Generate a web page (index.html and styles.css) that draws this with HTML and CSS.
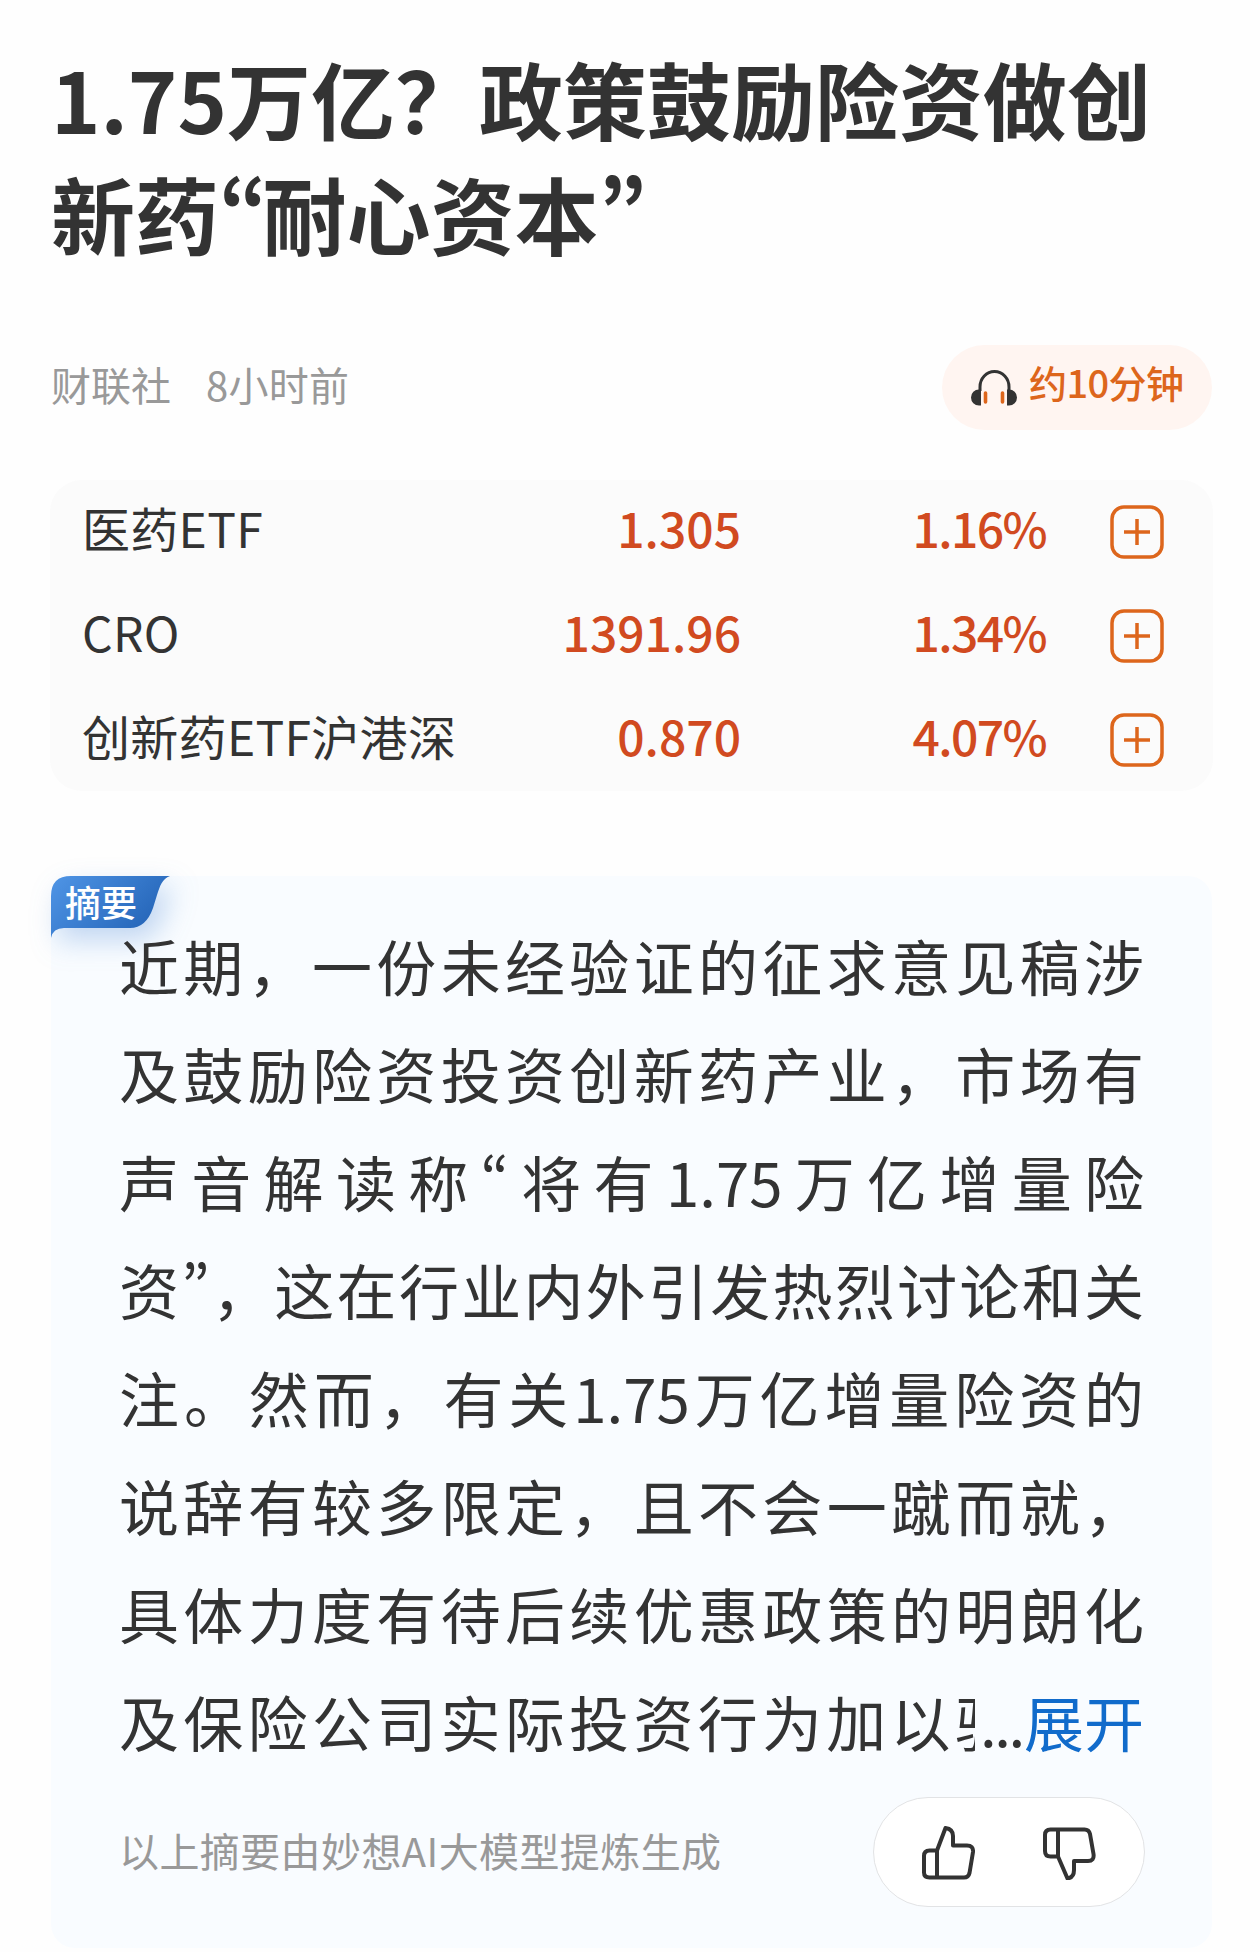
FILE: index.html
```html
<!DOCTYPE html>
<html lang="zh-CN">
<head>
    <meta charset="UTF-8">
    <meta name="viewport" content="width=device-width, initial-scale=1.0">
    <title>1.75万亿？政策鼓励险资做创新药“耐心资本”</title>
    <link rel="stylesheet" href="styles.css">
</head>
<body>

    <div class="container">
        <h1>1.75万亿？政策鼓励险资做创<br>新药<span class="quote">“</span>耐心资本<span class="quote">”</span></h1>

        <!-- Source and listen button -->
        <div class="meta">
            <span class="source">财联社</span>
            <span class="time">8小时前</span>
            <div class="listen">
                <svg class="headphones" viewBox="0 0 46 38">
                    <path d="M9 22V18a14.500 15.500 0 0 1 29 0v4" fill="none" stroke="#333" stroke-width="3"/>
                    <path d="M10 20.500v16H8a8 8 0 0 1 0-16zM36 20.500v16h2a8 8 0 0 0 0-16z" fill="#333"/>
                    <path d="M14.500 24v9M31.500 24v9" stroke="#dd661c" stroke-width="3.600" stroke-linecap="round"/>
                </svg>
                <span>约10分钟</span>
            </div>
        </div>

        <!-- Related stocks -->
        <div class="stocks">
            <div class="stock">
                <span class="name">医药ETF</span>
                <span class="price">1.305</span>
                <span class="change">1.16%</span>
                <svg class="add" viewBox="0 0 54 54"><rect x="2" y="2" width="50" height="50" rx="12"/><path d="M27 14v26M14 27h26"/></svg>
            </div>
            <div class="stock">
                <span class="name">CRO</span>
                <span class="price">1391.96</span>
                <span class="change">1.34%</span>
                <svg class="add" viewBox="0 0 54 54"><rect x="2" y="2" width="50" height="50" rx="12"/><path d="M27 14v26M14 27h26"/></svg>
            </div>
            <div class="stock">
                <span class="name">创新药ETF沪港深</span>
                <span class="price">0.870</span>
                <span class="change">4.07%</span>
                <svg class="add" viewBox="0 0 54 54"><rect x="2" y="2" width="50" height="50" rx="12"/><path d="M27 14v26M14 27h26"/></svg>
            </div>
        </div>

        <!-- AI summary -->
        <div class="summary">
            <div class="tag">
                <svg class="tag-shape" viewBox="0 0 120 62">
                    <defs>
                        <linearGradient id="tagFill" x1="0" y1="0" x2="1" y2="0.5">
                            <stop offset="0" stop-color="#4f95e6"/>
                            <stop offset="1" stop-color="#2565b8"/>
                        </linearGradient>
                    </defs>
                    <path d="M0 62V20Q0 0 20 0H119C111 3 109 10 106 19L102 32Q95 52 79 52H13Q2 52 0 62Z" fill="url(#tagFill)"/>
                </svg>
                <span class="tag-text">摘要</span>
            </div>

            <div class="summary-text">
                <p>近期，一份未经验证的征求意见稿涉</p>
                <p>及鼓励险资投资创新药产业，市场有</p>
                <p>声音解读称<span class="quote">“</span>将有1.75万亿增量险</p>
                <p>资<span class="quote">”</span>，这在行业内外引发热烈讨论和关</p>
                <p>注。然而，有关1.75万亿增量险资的</p>
                <p>说辞有较多限定，且不会一蹴而就，</p>
                <p>具体力度有待后续优惠政策的明朗化</p>
                <div class="last-line">
                    <span class="cut">及保险公司实际投资行为加以验</span>
                    <span class="dots">...</span>
                    <a class="expand">展开</a>
                </div>
            </div>

            <div class="summary-footer">
                <span class="notice">以上摘要由妙想AI大模型提炼生成</span>
                <div class="votes">
                    <svg class="vote" viewBox="0 0 54 54">
                        <path d="M16 24.500H8.500Q3 24.500 3 30V46.500Q3 51.500 8.500 51.500H43Q47.500 51.500 48.500 47L52 26Q52.500 19.500 46 19.500H32V10Q32 3 24.500 2L16 24.500V51.500"/>
                    </svg>
                    <svg class="vote" viewBox="0 0 54 54">
                        <path d="M16 30.500H8.500Q3 30.500 3 25V9Q3 3.500 8.500 3.500H42.500Q47 3.500 48 8L51.500 28Q52.500 35 46 35H32V44Q32 51.500 25.500 52.500L16 30.500V3.500"/>
                    </svg>
                </div>
            </div>
        </div>
    </div>

</body>
</html>
```

FILE: styles.css
```css
body {
    font-family: "Noto Sans CJK SC", sans-serif;
    background-color: #fefefe;
    color: #333;
    margin: 0;
    padding: 0;
}

.container {
    width: 1161px;
    margin: 0 auto 0 51px;
    padding-top: 40px;
}

h1 {
    margin: 0;
    font-size: 84px;
    font-weight: 700;
    line-height: 115px;
    white-space: nowrap;
}

/* narrow quotes instead of the full-width ones */
.quote {
    font-feature-settings: "pwid";
}

h1 .quote {
    letter-spacing: -5px;
}

.meta {
    display: flex;
    align-items: center;
    height: 85px;
    margin-top: 75px;
    font-size: 40px;
    line-height: 60px;
    color: #999;
}

.source, .time {
    margin-top: -8px;
}

.time {
    margin-left: 35px;
    letter-spacing: 0.3px;
}

.listen {
    display: flex;
    align-items: center;
    box-sizing: border-box;
    width: 270px;
    height: 85px;
    margin-left: auto;
    padding-left: 29px;
    border-radius: 43px;
    background-color: #fff5f1;
    color: #dd661c;
    font-size: 38px;
    white-space: nowrap;
}

.listen span {
    margin: -11px 0 0 12px;
    letter-spacing: -0.6px;
    font-weight: 500;
}

.headphones {
    width: 46px;
    height: 38px;
}

.stocks {
    box-sizing: border-box;
    height: 311px;
    margin: 50px -1px 0;
    border-radius: 32px;
    background-color: #fbfbfb;
}

.stock {
    display: grid;
    grid-template-columns: 400px 259px 305px 54px;
    align-items: center;
    height: 104px;
    padding-left: 32px;
    font-size: 48px;
    line-height: 80px;
    white-space: nowrap;
}

.name, .price, .change {
    margin-top: -10px;
}

.name {
    letter-spacing: 0.3px;
}

.price, .change {
    text-align: right;
    font-weight: 500;
    color: #d14a20;
}

.change {
    letter-spacing: -1.6px;
}

.add {
    width: 54px;
    height: 54px;
    margin-left: 64px;
    fill: none;
    stroke: #dd661c;
    stroke-width: 3.500;
}

.summary {
    position: relative;
    box-sizing: border-box;
    height: 1072px;
    margin-top: 85px;
    padding: 35px 68px 0;
    border-radius: 24px;
    background-color: #f9fcff;
}

.tag {
    position: absolute;
    top: 0;
    left: 0;
    width: 120px;
    height: 62px;
}

.tag-shape {
    display: block;
    width: 120px;
    height: 62px;
    overflow: visible;
    filter: drop-shadow(8px 12px 14px rgba(60, 125, 210, 0.3));
}

.tag-text {
    position: absolute;
    top: 0;
    left: 14px;
    color: #fff;
    font-size: 36px;
    font-weight: 500;
    line-height: 50px;
}

.summary-text {
    position: relative;
    font-size: 60px;
    line-height: 108px;
    white-space: nowrap;
}

.summary-text p {
    margin: 0;
    text-align: justify;
    text-align-last: justify;
}

.last-line {
    display: flex;
}

.cut {
    width: 857px;
    overflow: hidden;
    letter-spacing: 4.3px;
}

.dots {
    width: 50px;
    padding-left: 5px;
    box-sizing: border-box;
    letter-spacing: -2.5px;
}

.expand {
    margin-left: -1px;
    color: #116bcb;
}

.summary-footer {
    display: flex;
    justify-content: space-between;
    align-items: center;
    height: 110px;
    margin: 22px -1px 0 0;
}

.notice {
    margin-top: -5px;
    color: #999;
    font-size: 40px;
    letter-spacing: 0.4px;
}

.votes {
    display: flex;
    align-items: center;
    justify-content: space-between;
    box-sizing: border-box;
    width: 272px;
    height: 110px;
    padding: 2px 48px 0 47px;
    border: 1px solid #e2e3e5;
    border-radius: 55px;
    background-color: #fff;
}

.vote {
    width: 54px;
    height: 54px;
    fill: none;
    stroke: #333;
    stroke-width: 4;
    stroke-linejoin: round;
}
```
